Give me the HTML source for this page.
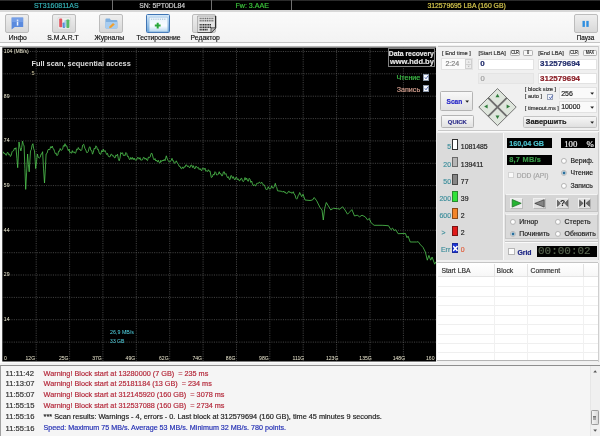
<!DOCTYPE html>
<html lang="ru">
<head>
<meta charset="utf-8">
<title>Victoria HDD scan</title>
<style>
html,body{margin:0;padding:0;}
body{-webkit-text-stroke:0.18px;width:600px;height:436px;overflow:hidden;background:#f0f0f0;font-family:"Liberation Sans",sans-serif;font-size:6.8px;color:#222;position:relative;}
#root{position:absolute;left:0;top:0;width:600px;height:436px;overflow:hidden;will-change:transform;}
.a{position:absolute;white-space:nowrap;line-height:1;}
.c{transform:translate(-50%,-50%);}
.m{transform:translateY(-50%);}
/* top bar */
#topbar{left:0;top:0;width:600px;height:10px;background:linear-gradient(#555 0,#000 1px);}
#topbar .sep{position:absolute;top:0;width:1px;height:10px;background:#707070;}
#topbar span{position:absolute;top:5.9px;transform:translate(-50%,-50%);font-size:6.8px;line-height:1;}
/* toolbar */
#toolbar{left:0;top:10px;width:600px;height:35px;background:linear-gradient(#fbfbfb,#f2f2f2);}
#tbline1{left:0;top:10px;width:600px;height:1.5px;background:#d8d8d8;}
#tbline2{left:0;top:41.8px;width:600px;height:1.5px;background:#c4c4c4;}
#tbline3{left:0;top:43.3px;width:600px;height:1.5px;background:#fdfdfd;}
.tb{position:absolute;top:14.3px;width:24px;height:18.5px;border:0.8px solid #bcbcbc;border-radius:2px;background:linear-gradient(#eeeeee,#d8d8d8);box-sizing:border-box;}
.tb.act{border-color:#3f74b4;border-radius:1.5px;background:linear-gradient(#d4e8f8,#6ea8dc);}
.tl{position:absolute;top:37.6px;transform:translate(-50%,-50%);font-size:6.8px;color:#141414;line-height:1;white-space:nowrap;}
/* graph */
#gframe{left:0;top:45px;width:438px;height:318px;background:#fafafa;}
#graph{position:absolute;left:2px;top:47px;}
/* right panel */
#rpanel{left:437px;top:46px;width:161.5px;height:316px;background:#f0f0f0;}
.lbl{font-size:5.7px;color:#333;}
.box{position:absolute;background:#fff;box-sizing:border-box;border:0.6px solid #e2e2e2;}
.btn{position:absolute;box-sizing:border-box;border:0.8px solid #b4b4b4;border-radius:1.5px;background:linear-gradient(#f8f8f8,#e2e2e2);}
.sbtn{position:absolute;box-sizing:border-box;border:0.7px solid #b2b2b2;border-radius:1.2px;background:#f7f7f7;height:6.6px;top:49.5px;}
.sbtn span{position:absolute;left:50%;top:50%;transform:translate(-50%,-50%) scaleX(.8);font-size:4.8px;line-height:1;color:#2a2a2a;}
.num{font-size:8px;font-weight:bold;}
.teal{color:#3f8f9c;}
.blk{position:absolute;box-sizing:border-box;border:0.8px solid #303030;width:6px;height:10.4px;left:452.3px;}
.radio{position:absolute;width:6.2px;height:6.2px;border-radius:50%;box-sizing:border-box;border:0.7px solid #b8b8b8;background:radial-gradient(#ffffff 40%,#e6e6e6);transform:translate(-50%,-50%);}
.radio.on::after{content:"";position:absolute;left:50%;top:50%;width:2.8px;height:2.8px;border-radius:50%;background:#2a6f9c;transform:translate(-50%,-50%);}
.chk{position:absolute;box-sizing:border-box;border:0.7px solid #a8a8a8;background:#fdfdfd;}
.lcd{position:absolute;background:#000;box-sizing:border-box;}
/* log */
#log{left:0;top:365px;width:600px;height:71px;background:#f5f5f5;border-top:1px solid #8e8e8e;border-left:1px solid #a0a0a0;box-sizing:border-box;}
.lt{position:absolute;left:5.5px;font-size:7.6px;color:#303030;transform:translateY(-50%);line-height:1;white-space:nowrap;}
.lm{position:absolute;left:43.6px;font-size:7.2px;transform:translateY(-50%);line-height:1;white-space:nowrap;}
.w{color:#b4283a;font-size:7.27px;}
.k{color:#222;}
.b{color:#2430b4;font-size:7.16px;}
</style>
</head>
<body>
<div id="root">
<!-- TOP BAR -->
<div id="topbar" class="a">
  <div class="sep" style="left:112.3px"></div><div class="sep" style="left:211.4px"></div><div class="sep" style="left:291.4px"></div>
  <span style="left:56.3px;color:#35b4b8;font-size:6.95px">ST3160811AS</span>
  <span style="left:162.2px;color:#d0d0d0">SN: 5PT0DL84</span>
  <span style="left:252.2px;top:6.6px;color:#3cc43c;font-size:7.1px">Fw: 3.AAE</span>
  <span style="left:466.6px;color:#dccc50;font-size:6.85px">312579695 LBA (160 GB)</span>
</div>
<!-- TOOLBAR -->
<div id="toolbar" class="a"></div>
<div id="tbline1" class="a"></div><div id="tbline2" class="a"></div><div id="tbline3" class="a"></div>

<div class="tb" style="left:5.4px">
  <svg width="22" height="16.5" viewBox="0 0 22 16.5" style="position:absolute;left:0;top:0"><path d="M5.6 2.6h11.6v9.4h-8.4l-3.2 2.4z" fill="#5a8ade"/><path d="M5.6 2.6h11.6v4.5h-11.6z" fill="#86acec" opacity=".6"/><rect x="10.8" y="6.6" width="1.5" height="4" fill="#eef4ff"/><rect x="10.8" y="4.6" width="1.5" height="1.3" fill="#eef4ff"/></svg>
</div>
<div class="tl" style="left:17.8px">Инфо</div>

<div class="tb" style="left:52.3px">
  <svg width="22" height="16.5" viewBox="0 0 22 16.5" style="position:absolute;left:0;top:0"><rect x="5" y="2.4" width="12.6" height="11.6" rx=".8" fill="#efefef" stroke="#cfcfcf" stroke-width=".5"/><rect x="6.2" y="3.6" width="3" height="8.6" rx=".8" fill="#e25560"/><rect x="9.6" y="7.4" width="2.6" height="5.6" rx=".8" fill="#5a8fd8"/><rect x="11.4" y="5" width="2" height="7" rx=".8" fill="#9cc4ee" opacity=".8"/><rect x="13.4" y="4.4" width="3" height="8.6" rx=".8" fill="#58b868"/></svg>
</div>
<div class="tl" style="left:63px">S.M.A.R.T</div>

<div class="tb" style="left:99.3px">
  <svg width="22" height="16.5" viewBox="0 0 22 16.5" style="position:absolute;left:0;top:0"><path d="M5.4 4.6q0-1 1-1h3.4l1 1.4h5.6q1 0 1 1v6.4q0 1-1 1h-10q-1 0-1-1z" fill="#7fb0e0"/><path d="M5.4 7h12v5.4q0 1-1 1h-10q-1 0-1-1z" fill="#a8cdf0"/><path d="M9.4 11.4l3.6-3.4 1.8 1.6-3.6 3.2-2 .4z" fill="#f0a030"/></svg>
</div>
<div class="tl" style="left:109.3px">Журналы</div>

<div class="tb act" style="left:146px">
  <svg width="24" height="18.5" viewBox="0 0 24 18.5" style="position:absolute;left:-.8px;top:-.8px"><defs><linearGradient id="tg" x1="0" y1="0" x2="0" y2="1"><stop offset="0" stop-color="#eaf4fc"/><stop offset=".6" stop-color="#f8fcff"/><stop offset="1" stop-color="#b8d8f0"/></linearGradient></defs><rect x="3.2" y="2.2" width="18.6" height="14.6" rx=".8" fill="url(#tg)" stroke="#8fb8dc" stroke-width=".5"/><path d="M5 4.2h15" stroke="#9ab4cc" stroke-width=".9" stroke-dasharray="1.2 1"/><path d="M10.7 7.7h2v1.9h1.9v2h-1.9v1.9h-2v-1.9h-1.9v-2h1.9z" fill="#2aa83a"/></svg>
</div>
<div class="tl" style="left:158.5px">Тестирование</div>

<div class="tb" style="left:192.3px">
  <svg width="24" height="18.5" viewBox="0 0 24 18.5" style="position:absolute;left:-.8px;top:-.8px"><path d="M4.6 1h18v11.8l-4.6 5h-13.4z" fill="#e4e4e4" stroke="#8a8a8a" stroke-width=".6"/><path d="M22.6 1v11.8l-4.6 5h-13.4" fill="none" stroke="#2c2c2c" stroke-width="1.3"/><g stroke="#6e6e6e" stroke-width="1.5" stroke-dasharray="1.2 .6"><path d="M6.6 3.6h14.4M6.6 5.8h14.4"/></g><g stroke="#2e2e2e" stroke-width="1.6" stroke-dasharray="1.2 .5"><path d="M6.6 9.8h11.6M6.6 12.2h11.6M6.6 14.6h8.4"/></g><path d="M18 17.8v-5h4.6" fill="#bdbdbd" stroke="#3a3a3a" stroke-width=".8"/></svg>
</div>
<div class="tl" style="left:205.2px">Редактор</div>

<div class="tb" style="left:574.2px">
  <svg width="22" height="16.5" viewBox="0 0 22 16.5" style="position:absolute;left:0;top:0"><rect x="7.5" y="5.9" width="2.4" height="6" fill="#2f8fe0"/><rect x="11.3" y="5.9" width="2.4" height="6" fill="#2f8fe0"/></svg>
</div>
<div class="tl" style="left:585.5px;font-size:6.3px">Пауза</div>

<!-- GRAPH -->
<div id="gframe" class="a"></div>
<div class="a" style="left:0;top:45.5px;width:438px;height:1px;background:#b4b4b4"></div>
<svg id="graph" width="435" height="315" viewBox="0 0 435 315">
<rect width="435" height="315" fill="#fafafa"/>
<g transform="translate(.3,.5)">
<rect width="434.4" height="314" fill="#000"/>
<clipPath id="gc"><rect width="434.4" height="314"/></clipPath>
<g clip-path="url(#gc)">
<g stroke="#6c6c6c" stroke-width="0.62" stroke-dasharray="1.1 1.2" fill="none"><line x1="33.9" y1="0" x2="33.9" y2="314"/><line x1="67.3" y1="0" x2="67.3" y2="314"/><line x1="100.6" y1="0" x2="100.6" y2="314"/><line x1="134.0" y1="0" x2="134.0" y2="314"/><line x1="167.4" y1="0" x2="167.4" y2="314"/><line x1="200.8" y1="0" x2="200.8" y2="314"/><line x1="234.2" y1="0" x2="234.2" y2="314"/><line x1="267.5" y1="0" x2="267.5" y2="314"/><line x1="300.9" y1="0" x2="300.9" y2="314"/><line x1="334.3" y1="0" x2="334.3" y2="314"/><line x1="367.7" y1="0" x2="367.7" y2="314"/><line x1="401.1" y1="0" x2="401.1" y2="314"/><line x1="0" y1="4.0" x2="434.4" y2="4.0"/><line x1="0" y1="26.3" x2="434.4" y2="26.3"/><line x1="0" y1="48.7" x2="434.4" y2="48.7"/><line x1="0" y1="71.1" x2="434.4" y2="71.1"/><line x1="0" y1="93.4" x2="434.4" y2="93.4"/><line x1="0" y1="115.8" x2="434.4" y2="115.8"/><line x1="0" y1="138.1" x2="434.4" y2="138.1"/><line x1="0" y1="160.5" x2="434.4" y2="160.5"/><line x1="0" y1="182.8" x2="434.4" y2="182.8"/><line x1="0" y1="205.2" x2="434.4" y2="205.2"/><line x1="0" y1="227.5" x2="434.4" y2="227.5"/><line x1="0" y1="249.9" x2="434.4" y2="249.9"/><line x1="0" y1="272.2" x2="434.4" y2="272.2"/><line x1="0" y1="294.6" x2="434.4" y2="294.6"/></g>
<polyline points="0.9,104.2 1.7,106.2 2.5,105.6 3.3,107.4 4.1,107.8 4.9,105.1 5.7,105.0 6.5,107.4 7.3,106.7 8.1,109.0 8.9,107.8 9.8,104.2 10.6,103.4 11.4,103.2 12.1,100.8 12.9,101.7 13.7,100.2 14.6,110.9 15.4,120.2 16.7,94.5 17.6,99.9 18.6,103.4 19.4,99.9 20.2,93.7 21.0,96.8 21.8,98.5 22.6,121.0 23.4,141.9 24.3,125.4 25.3,106.5 26.1,116.9 26.9,124.3 28.2,103.4 29.0,102.1 29.8,97.6 30.6,96.2 31.4,101.3 32.2,103.4 33.4,121.1 34.2,114.4 35.0,106.5 36.0,109.9 37.1,110.5 37.9,109.8 38.7,106.6 39.5,106.5 40.3,104.2 41.2,120.7 42.2,135.5 43.0,122.3 43.8,106.5 44.8,105.7 45.7,102.2 46.7,101.8 47.5,102.2 48.3,99.2 49.1,100.4 49.9,98.5 50.7,101.1 51.5,101.6 52.3,104.2 53.1,106.3 53.9,105.7 54.7,108.2 55.5,107.4 56.3,103.7 57.1,103.9 57.9,101.0 58.7,102.8 59.5,102.5 60.3,101.8 61.1,98.0 61.9,99.0 62.7,96.2 63.5,98.6 64.4,98.3 65.2,101.0 66.0,103.1 66.8,101.6 67.6,105.3 68.4,105.0 69.2,105.7 70.0,103.1 70.8,105.1 71.6,104.2 72.7,105.8 73.5,105.3 74.4,101.6 75.2,102.2 76.0,100.0 76.8,102.1 77.7,101.6 78.5,103.3 79.5,102.3 80.4,97.6 81.4,96.7 82.5,100.7 83.5,102.5 84.4,105.1 85.2,105.0 86.0,103.9 86.9,99.9 87.7,99.2 88.5,102.8 89.4,103.1 90.2,106.7 91.0,104.8 91.9,100.8 92.7,101.6 93.6,98.3 94.4,99.2 95.2,102.1 96.0,101.8 96.9,105.5 97.7,106.7 98.5,106.7 99.4,103.0 100.2,104.4 101.0,101.7 101.8,104.1 102.7,103.0 103.5,105.0 104.4,107.0 105.2,105.9 106.0,108.8 106.9,109.2 107.7,109.4 108.6,106.8 109.4,106.7 110.2,108.5 111.1,108.2 111.9,110.0 112.7,110.5 113.5,107.6 114.4,108.3 115.2,106.7 116.0,111.0 116.9,113.3 117.7,110.5 118.5,105.0 119.4,106.3 120.2,105.2 121.0,108.0 121.9,107.5 122.7,108.3 123.6,105.0 124.4,105.8 125.2,109.1 126.1,108.9 126.9,111.7 127.7,112.2 128.5,109.9 129.4,111.8 130.2,110.0 131.0,112.1 131.8,110.5 132.7,112.6 133.5,112.5 134.3,112.5 135.2,110.0 136.0,110.0 136.8,111.7 137.7,110.1 138.5,112.7 139.4,112.5 140.2,112.3 141.1,109.9 141.9,110.0 142.7,111.8 143.6,110.6 144.4,112.5 145.2,113.1 146.1,109.6 146.9,110.0 147.8,109.7 148.8,106.0 149.7,105.8 151.0,110.8 151.8,112.4 152.7,111.0 153.5,113.5 154.4,112.5 155.2,114.6 156.1,112.8 156.9,115.0 157.7,115.7 158.5,112.8 159.4,114.1 160.2,112.5 161.0,113.5 161.9,111.9 162.7,113.3 164.0,108.3 165.0,111.5 166.0,113.3 166.8,114.4 167.7,114.2 168.7,113.3 169.7,110.8 170.4,113.2 171.2,113.2 171.9,115.8 172.9,115.2 174.0,113.3 175.0,115.6 176.0,116.7 176.8,118.8 177.7,118.7 178.5,120.8 179.3,121.3 180.2,119.4 181.0,121.0 181.9,119.2 182.7,119.8 183.6,117.3 184.4,117.5 185.2,119.2 186.1,118.3 186.9,120.0 187.7,120.1 188.6,117.6 189.4,117.5 190.2,120.0 191.1,118.2 191.9,120.8 192.7,121.3 193.6,118.7 194.4,119.2 195.2,120.5 196.0,119.8 196.9,122.1 197.7,121.0 198.5,122.5 199.3,123.3 200.2,120.6 201.0,120.8 201.8,122.0 202.7,120.6 203.5,123.8 204.4,123.3 205.2,124.0 206.0,122.2 206.9,123.9 207.7,123.3 209.0,130.0 210.0,129.4 211.0,126.7 211.8,127.6 212.7,124.2 213.5,125.0 214.3,127.5 215.2,127.5 216.0,126.7 216.9,124.2 217.7,126.5 218.6,126.2 219.4,128.3 220.2,128.2 221.1,124.5 221.9,124.2 222.7,126.9 223.6,126.0 224.4,128.3 225.2,130.2 226.1,129.2 226.9,131.7 227.7,132.1 228.6,128.1 229.4,128.3 230.2,130.8 231.1,129.2 231.9,131.7 232.7,132.4 233.6,129.8 234.4,130.0 235.2,132.2 236.1,131.3 236.9,133.3 237.7,133.1 238.6,131.0 239.4,130.8 240.2,133.4 241.0,134.2 241.8,132.9 242.7,130.0 243.5,132.3 244.4,130.7 245.2,133.3 246.0,133.8 246.9,130.8 247.7,131.7 248.5,134.9 249.4,133.6 250.2,136.7 251.0,138.2 251.9,137.0 252.7,138.3 253.5,138.3 254.4,135.9 255.2,135.8 256.0,136.0 256.9,134.6 257.7,135.0 258.5,136.1 259.4,134.7 260.2,135.8 261.0,137.6 261.9,137.4 262.7,139.2 263.6,141.6 264.4,142.5 265.2,141.3 266.0,139.2 266.8,141.2 267.7,141.7 268.6,140.9 269.4,138.3 270.2,140.3 271.0,140.8 272.0,139.1 273.0,135.8 273.7,138.9 274.5,140.3 275.2,143.3 279.4,143.8 280.2,144.7 281.1,143.5 281.9,144.9 282.7,144.2 283.6,145.9 284.4,145.8 285.2,145.7 286.1,143.9 286.9,143.8 287.7,145.3 288.6,144.4 289.4,145.8 290.2,145.5 291.0,144.2 291.8,146.5 292.7,147.5 293.6,150.7 294.4,151.7 295.1,150.8 295.9,147.9 296.6,147.5 297.4,145.0 299.4,149.2 300.7,146.7 302.7,152.5 307.7,153.0 310.2,152.5 311.9,150.0 314.4,153.3 317.7,160.0 319.7,162.5 321.0,172.5 322.4,160.8 324.0,155.0 326.0,158.3 328.5,162.5 331.0,160.8 335.2,161.2 337.7,161.7 340.2,159.2 342.7,162.5 345.2,166.7 346.9,165.0 349.6,162.1 352.2,168.5 354.9,167.7 357.3,169.3 359.7,167.7 362.9,169.3 365.3,172.5 367.0,170.9 368.6,175.0 371.8,177.8 379.8,177.8 386.2,178.2 388.6,182.2 390.2,180.6 391.8,183.0 393.4,182.2 395.8,186.2 403.1,185.9 404.7,190.2 405.8,188.6 407.9,194.5 414.3,194.5 415.9,194.2 418.3,197.4 420.7,199.8 423.1,204.6 425.0,212.7 426.6,207.9 428.4,212.7 429.8,209.5 432.4,216.7 433.5,214.3" fill="none" stroke="#50c650" stroke-width="0.8" stroke-linejoin="round"/>
<g font-family="Liberation Sans, sans-serif" font-size="5.1" fill="#ecE8d0"><text x="1.5" y="5.3">104 (MB/s)</text><text x="1.5" y="50.0">89</text><text x="1.5" y="94.7">74</text><text x="1.5" y="139.4">59</text><text x="1.5" y="184.1">44</text><text x="1.5" y="228.8">29</text><text x="1.5" y="273.5">14</text><text x="1.6" y="312.2">0</text><text x="23.2" y="312.2">12G</text><text x="56.6" y="312.2">25G</text><text x="89.9" y="312.2">37G</text><text x="123.3" y="312.2">49G</text><text x="156.7" y="312.2">62G</text><text x="190.1" y="312.2">74G</text><text x="223.5" y="312.2">86G</text><text x="256.8" y="312.2">98G</text><text x="290.2" y="312.2">111G</text><text x="323.6" y="312.2">123G</text><text x="357.0" y="312.2">135G</text><text x="390.4" y="312.2">148G</text><text x="423.7" y="312.2">160</text></g>
<text x="29.1" y="18.9" font-family="Liberation Sans, sans-serif" font-size="7.4" font-weight="bold" fill="#dcdcdc">Full scan, sequential access</text>
<text x="29.2" y="27.4" font-family="Liberation Sans, sans-serif" font-size="5.6" fill="#d0c8a0">5</text>
<text x="107.8" y="286.5" font-family="Liberation Sans, sans-serif" font-size="5.3" fill="#54dcec">26,9 MB/s</text>
<text x="107.8" y="295.6" font-family="Liberation Sans, sans-serif" font-size="5" fill="#54dcec">33 GB</text>
</g>
</g>
</svg>
<div class="a" style="left:388px;top:48.2px;width:47.3px;height:18.5px;box-sizing:border-box;border:0.7px solid #808080;background:#000"></div>
<div class="a" style="right:166.2px;top:54px;transform:translateY(-50%);font-size:6.8px;font-weight:bold;color:#e6e6e6">Data recovery</div>
<div class="a" style="right:166.2px;top:62.1px;transform:translateY(-50%);font-size:7.5px;font-weight:bold;color:#e6e6e6">www.hdd.by</div>
<div class="a m" style="left:396.6px;top:79.3px;font-size:7.1px;color:#3fc04a">Чтение</div>
<div class="a m" style="left:396.8px;top:90.6px;font-size:7.1px;color:#d4a090">Запись</div>
<div class="chk" style="left:422.6px;top:74.2px;width:6.4px;height:6.4px;background:#f6f8fc;border-color:#8a96a8"><svg width="5" height="5" viewBox="0 0 5 5" style="position:absolute;left:0;top:0"><path d="M.9 2.4l1.1 1.4 2-3" fill="none" stroke="#304898" stroke-width=".8"/></svg></div>
<div class="chk" style="left:422.6px;top:85.2px;width:6.4px;height:6.4px;background:#f6f8fc;border-color:#8a96a8"><svg width="5" height="5" viewBox="0 0 5 5" style="position:absolute;left:0;top:0"><path d="M.9 2.4l1.1 1.4 2-3" fill="none" stroke="#304898" stroke-width=".8"/></svg></div>

<!-- RIGHT PANEL -->
<div id="rpanel" class="a"></div>
<div class="a" style="left:436.4px;top:46px;width:1px;height:316px;background:#ececec"></div>
<div class="a" style="left:437.5px;top:45.5px;width:161px;height:1px;background:#c6c6c6"></div>
<div class="a" style="left:597.6px;top:46px;width:1px;height:316px;background:#cfcfcf"></div>

<div class="a m lbl" style="left:442px;top:53.6px">[ End time ]</div>
<div class="a m lbl" style="left:478.4px;top:53.6px">[Start LBA]</div>
<div class="a m lbl" style="left:538.3px;top:53.6px">[End LBA]</div>
<div class="sbtn" style="left:510px;width:10.4px"><span>CLR</span></div>
<div class="sbtn" style="left:522.8px;width:10px"><span>0</span></div>
<div class="sbtn" style="left:569.3px;width:10.2px"><span>CLR</span></div>
<div class="sbtn" style="left:583px;width:13.8px"><span>MAX</span></div>

<div class="box" style="left:441.4px;top:58px;width:31.4px;height:12.2px;background:#fbfbfb"></div>
<div class="a m" style="left:445.4px;top:65.2px;font-size:7.1px;color:#808080">2:24</div>
<div class="a" style="left:464.6px;top:59px;width:7.4px;height:10.4px;background:#ececec;border:0.6px solid #d0d0d0;box-sizing:border-box"></div>
<div class="a" style="left:464.6px;top:64px;width:7.4px;height:0.6px;background:#cfcfcf"></div>
<svg class="a" style="left:464.6px;top:59px" width="7.4" height="10.4" viewBox="0 0 7.4 10.4"><path d="M2.6 3.6l1.1-1.4 1.1 1.4zM2.6 6.8l1.1 1.4 1.1-1.4z" fill="#b4b4b4"/></svg>

<div class="box" style="left:478.2px;top:58.5px;width:55.6px;height:11px"></div>
<div class="a m num" style="left:480.2px;top:64.2px;color:#1f2a6a">0</div>
<div class="box" style="left:538.2px;top:58.5px;width:58.8px;height:11px"></div>
<div class="a m num" style="left:540px;top:64.2px;color:#1f2a6a">312579694</div>
<div class="box" style="left:478.2px;top:73.2px;width:55.6px;height:10.4px;background:#ebebeb;border-color:#e4e4e4"></div>
<div class="a m" style="left:480.4px;top:78.6px;font-size:7.6px;color:#9c9c9c">0</div>
<div class="box" style="left:538.2px;top:73.2px;width:58.8px;height:10.4px"></div>
<div class="a m num" style="left:540px;top:78.6px;color:#8a1c24">312579694</div>

<!-- Scan / quick -->
<div class="btn" style="left:440.3px;top:91px;width:32.6px;height:19.6px"></div>
<div class="a c" style="left:454.4px;top:102px;font-size:6.6px;font-weight:bold;color:#2828c8">Scan</div>
<svg class="a" style="left:464.6px;top:99.8px" width="4.4" height="3" viewBox="0 0 4.4 3"><path d="M.3.4h3.8l-1.9 2.3z" fill="#222"/></svg>
<div class="btn" style="left:441px;top:115.2px;width:32.6px;height:12.6px"></div>
<div class="a c" style="left:457.3px;top:122.9px;font-size:5.9px;font-weight:bold;color:#30308c">QUICK</div>

<!-- diamond -->
<svg class="a" style="left:477px;top:87px" width="41" height="41" viewBox="0 0 41 41">
  <path d="M20.5 1.6L39.2 20.1 20.5 38.6 1.8 20.1z" fill="#dfe6dd" stroke="#555" stroke-width=".8"/>
  <path d="M11.2 10.8L29.8 29.4M29.8 10.8L11.2 29.4" stroke="#6e6e6e" stroke-width="1.9" fill="none"/>
  <path d="M18.5 10.3l2-3.5 2 3.5z" fill="#2f7e3c"/>
  <path d="M18.5 28.6l2 3.5 2-3.5z" fill="#2f7e3c"/>
  <path d="M10.6 17.6l-3.5 2 3.5 2z" fill="#2f7e3c"/>
  <path d="M29.6 17.6l3.5 2-3.5 2z" fill="#2f7e3c"/>
</svg>

<div class="a m lbl" style="left:524.8px;top:89.6px">[ block size ]</div>
<div class="a m lbl" style="left:524.8px;top:96.9px">[ auto ]</div>
<div class="a m lbl" style="left:524.8px;top:108.9px">[ timeout.ms ]</div>
<div class="chk" style="left:546.6px;top:94.4px;width:6.8px;height:6px;background:#f2f5fb;border-color:#9aa4b8"><svg width="6" height="5" viewBox="0 0 6 5" style="position:absolute;left:0;top:0"><path d="M1.3 2.2l1.2 1.5 2.2-3.2" fill="none" stroke="#3048a8" stroke-width=".8"/></svg></div>
<div class="box" style="left:559.4px;top:87.2px;width:37.6px;height:12.2px;background:#fafafa"></div>
<div class="a m" style="left:561.2px;top:93.4px;font-size:7px;color:#222">256</div>
<svg class="a" style="left:590px;top:92.2px" width="4.4" height="3" viewBox="0 0 4.4 3"><path d="M.3.4h3.8l-1.9 2.3z" fill="#222"/></svg>
<div class="box" style="left:559.4px;top:100.7px;width:37.6px;height:12.2px;background:#fafafa"></div>
<div class="a m" style="left:561.2px;top:106.9px;font-size:6.9px;color:#222">10000</div>
<svg class="a" style="left:590px;top:105.8px" width="4.4" height="3" viewBox="0 0 4.4 3"><path d="M.3.4h3.8l-1.9 2.3z" fill="#222"/></svg>
<div class="btn" style="left:523.4px;top:115.7px;width:73.8px;height:12.2px;border-color:#c4c4c4;background:linear-gradient(#f6f6f6,#e0e0e0)"></div>
<div class="a m" style="left:525.8px;top:121.9px;font-size:7.4px;font-weight:bold;color:#222">Завершить</div>
<svg class="a" style="left:590px;top:120.8px" width="4.4" height="3" viewBox="0 0 4.4 3"><path d="M.3.4h3.8l-1.9 2.3z" fill="#222"/></svg>

<!-- separator -->
<div class="a" style="left:437.5px;top:130px;width:161px;height:1px;background:#c8c8c8"></div>
<div class="a" style="left:437.5px;top:131px;width:161px;height:1px;background:#fafafa"></div>
<!-- left subpanel -->
<div class="a" style="left:437.2px;top:133px;width:66.2px;height:126.6px;background:#dbdbdb"></div>
<div class="a" style="left:503.4px;top:133px;width:1px;height:126.6px;background:#f8f8f8"></div>

<div class="a m teal" style="right:149px;top:147.2px;font-size:6.9px">5</div>
<div class="blk" style="top:139.2px;background:#fff"></div>
<div class="a m" style="left:460.8px;top:147.2px;font-size:6.9px">1081485</div>
<div class="a m teal" style="right:149px;top:165px;font-size:6.9px">20</div>
<div class="blk" style="top:156.7px;background:#b6b6b6;border-color:#6a6a6a"></div>
<div class="a m" style="left:460.8px;top:165px;font-size:6.9px">139411</div>
<div class="a m teal" style="right:149px;top:181.6px;font-size:6.9px">50</div>
<div class="blk" style="top:174.2px;background:#868686;border-color:#4a4a4a"></div>
<div class="a m" style="left:460.8px;top:181.8px;font-size:6.9px">77</div>
<div class="a m teal" style="right:149px;top:199px;font-size:6.9px">200</div>
<div class="blk" style="top:191.4px;background:#2fe33a;border-color:#2a8a30"></div>
<div class="a m" style="left:460.8px;top:198.6px;font-size:6.9px">39</div>
<div class="a m teal" style="right:149px;top:216px;font-size:6.9px">600</div>
<div class="blk" style="top:208.4px;background:#f2842a;border-color:#8a4a1a"></div>
<div class="a m" style="left:460.8px;top:215.8px;font-size:6.9px">2</div>
<div class="a m teal" style="left:441.6px;top:232.6px;font-size:6.9px">&gt;</div>
<div class="blk" style="top:226px;background:#e11b1b;border-color:#7a1616"></div>
<div class="a m" style="left:460.8px;top:233.2px;font-size:6.9px">2</div>
<div class="a m teal" style="left:441px;top:249.8px;font-size:6.9px">Err</div>
<div class="blk" style="top:242.6px;background:#1c34d8;border-color:#1a2a9a"><svg width="4.8" height="9" viewBox="0 0 4.8 9" style="position:absolute;left:0;top:0"><path d="M.1 2.1l4.4 4.8M4.5 2.1l-4.4 4.8" stroke="#fff" stroke-width="1.5"/></svg></div>
<div class="a m" style="left:460.8px;top:249.9px;font-size:6.9px;color:#e2603e">0</div>

<!-- right subpanel -->
<div class="a" style="left:504.4px;top:133px;width:93.4px;height:127px;background:#e7e7e7"></div>
<div class="lcd" style="left:506.6px;top:138.2px;width:45.6px;height:9.8px"></div>
<div class="a m" style="left:509.2px;top:143.6px;font-size:7.2px;font-weight:bold;color:#4cc4d0">160,04 GB</div>
<div class="lcd" style="left:561px;top:138.2px;width:34.2px;height:9.8px"></div>
<div class="a m" style="left:564.2px;top:143.7px;font-family:'Liberation Serif',serif;font-size:8.8px;color:#ececec">100</div>
<div class="a m" style="left:586.4px;top:143.7px;font-family:'Liberation Serif',serif;font-size:8.8px;color:#ececec">%</div>
<div class="lcd" style="left:506.6px;top:155px;width:45.4px;height:10px"></div>
<div class="a m" style="left:509.2px;top:160px;font-size:7.4px;font-weight:bold;color:#3a9c4a;letter-spacing:.25px">8,7 MB/s</div>

<div class="radio" style="left:564.2px;top:160.6px"></div>
<div class="a m" style="left:570.4px;top:160.8px;font-size:6.8px">Вериф.</div>
<div class="radio on" style="left:564.2px;top:173px"></div>
<div class="a m" style="left:570.4px;top:173.2px;font-size:6.8px">Чтение</div>
<div class="radio" style="left:564.2px;top:185.6px"></div>
<div class="a m" style="left:570.4px;top:185.8px;font-size:6.8px">Запись</div>

<div class="chk" style="left:508px;top:172.3px;width:6px;height:6px;border-color:#d4d4d4;background:#fafafa"></div>
<div class="a m" style="left:516.8px;top:176px;font-size:6.7px;color:#a4a4a4">DDD (API)</div>

<!-- buttons panel -->
<div class="a" style="left:505px;top:194px;width:93px;height:18.2px;background:#d5d5d5;box-sizing:border-box;border:0.8px solid #c4c4c4;border-top-color:#f4f4f4"></div>
<div class="btn" style="left:510.2px;top:198px;width:13.2px;height:10.6px;border-color:#f2f2f2 #bcbcbc #bcbcbc #f2f2f2;background:#ececec;border-radius:0"></div>
<svg class="a" style="left:510.2px;top:198px" width="13.2" height="10.6" viewBox="0 0 13.2 10.6"><path d="M2.2 1.5v7.6l9-3.8z" fill="#25b432" stroke="#1a6a22" stroke-width=".7"/></svg>
<div class="btn" style="left:533.2px;top:198px;width:13.2px;height:10.6px;border-color:#f0f0f0 #b8b8b8 #b8b8b8 #f0f0f0;background:#e0e0e0;border-radius:0"></div>
<svg class="a" style="left:533.2px;top:198px" width="13.2" height="10.6" viewBox="0 0 13.2 10.6"><path d="M11.2 1.7v7.4l-9.4-3.7z" fill="#848484" stroke="#2e2e2e" stroke-width=".7"/></svg>
<div class="btn" style="left:555.8px;top:198px;width:13.2px;height:10.6px;border-color:#f0f0f0 #b8b8b8 #b8b8b8 #f0f0f0;background:#e0e0e0;border-radius:0"></div>
<svg class="a" style="left:555.8px;top:198px" width="13.2" height="10.6" viewBox="0 0 13.2 10.6"><path d="M1.4 2.2v6.2l3-3.1z" fill="#6a6a6a" stroke="#303030" stroke-width=".5"/><path d="M11.8 2.2v6.2l-3-3.1z" fill="#6a6a6a" stroke="#303030" stroke-width=".5"/><text x="6.6" y="8.4" text-anchor="middle" font-size="8.6" font-weight="bold" font-family="Liberation Sans, sans-serif" fill="#222">?</text></svg>
<div class="btn" style="left:578.2px;top:198px;width:13.2px;height:10.6px;border-color:#f0f0f0 #b8b8b8 #b8b8b8 #f0f0f0;background:#e0e0e0;border-radius:0"></div>
<svg class="a" style="left:578.2px;top:198px" width="13.2" height="10.6" viewBox="0 0 13.2 10.6"><path d="M1.6 2.2v6.2l3.6-3.1z" fill="#6a6a6a" stroke="#303030" stroke-width=".5"/><path d="M11.6 2.2v6.2l-3.6-3.1z" fill="#6a6a6a" stroke="#303030" stroke-width=".5"/><path d="M6.6 1.6v7.4" stroke="#222" stroke-width="1.2"/></svg>

<!-- radio panel -->
<div class="a" style="left:505px;top:214.4px;width:93px;height:25px;background:#dadada;box-sizing:border-box;border:0.8px solid #c6c6c6;border-top-color:#f2f2f2"></div>
<div class="radio" style="left:513px;top:221.7px"></div>
<div class="a m" style="left:519.2px;top:221.9px;font-size:6.9px">Игнор</div>
<div class="radio on" style="left:513px;top:233.7px"></div>
<div class="a m" style="left:519.2px;top:233.9px;font-size:6.9px">Починить</div>
<div class="radio" style="left:557.8px;top:221.7px"></div>
<div class="a m" style="left:564.6px;top:221.9px;font-size:6.9px">Стереть</div>
<div class="radio" style="left:557.8px;top:233.7px"></div>
<div class="a m" style="left:564.6px;top:233.9px;font-size:6.9px">Обновить</div>

<div class="a" style="left:505px;top:241.2px;width:93px;height:1px;background:#c8c8c8"></div>
<div class="a" style="left:505px;top:242.2px;width:93px;height:1px;background:#fafafa"></div>
<div class="chk" style="left:508px;top:248.4px;width:6.8px;height:6.8px;border-color:#b6b6b6"></div>
<div class="a m" style="left:517.4px;top:252.6px;font-size:6.9px;font-weight:bold;color:#1c2484">Grid</div>
<div class="lcd" style="left:537.4px;top:246px;width:59.8px;height:11px"></div>
<div class="a" style="left:538px;top:251.9px;transform:translateY(-50%) scaleX(.93);transform-origin:0 50%;font-family:'Liberation Mono',monospace;font-size:11.8px;color:#56644e">00:00:02</div>

<!-- table -->
<div class="a" style="left:437.5px;top:260px;width:161px;height:3px;background:#f0f0f0"></div>
<div id="tbl" class="a" style="left:437.2px;top:262.4px;width:160.5px;height:99px;background:#fff;box-sizing:border-box;border-top:0.7px solid #c4c4c4;border-bottom:1.2px solid #b4b4b4"></div>
<div class="a" style="left:437.5px;top:286px;width:160.2px;height:1px;background:#efefef"></div><div class="a" style="left:437.5px;top:296px;width:160.2px;height:1px;background:#efefef"></div><div class="a" style="left:437.5px;top:305px;width:160.2px;height:1px;background:#efefef"></div><div class="a" style="left:437.5px;top:315px;width:160.2px;height:1px;background:#efefef"></div><div class="a" style="left:437.5px;top:324px;width:160.2px;height:1px;background:#efefef"></div><div class="a" style="left:437.5px;top:334px;width:160.2px;height:1px;background:#efefef"></div><div class="a" style="left:437.5px;top:343px;width:160.2px;height:1px;background:#efefef"></div><div class="a" style="left:437.5px;top:352px;width:160.2px;height:1px;background:#efefef"></div>
<div class="a" style="left:493.7px;top:277px;width:.8px;height:83.2px;background:#f1f1f1"></div>
<div class="a" style="left:527.1px;top:277px;width:.8px;height:83.2px;background:#f1f1f1"></div>
<div class="a" style="left:582.9px;top:277px;width:.8px;height:83.2px;background:#f1f1f1"></div>
<div class="a" style="left:437.5px;top:263.4px;width:160.2px;height:13.8px;background:linear-gradient(#ffffff,#f7f7f7);border-bottom:0.7px solid #e4e4e4;box-sizing:border-box"></div>
<div class="a" style="left:493.7px;top:263.6px;width:.8px;height:13.4px;background:#e2e2e2"></div>
<div class="a" style="left:527.1px;top:263.6px;width:.8px;height:13.4px;background:#e2e2e2"></div>
<div class="a" style="left:582.9px;top:263.6px;width:.8px;height:13.4px;background:#e2e2e2"></div>
<div class="a m" style="left:441.4px;top:270.8px;font-size:6.8px;color:#333">Start LBA</div>
<div class="a m" style="left:496.6px;top:270.8px;font-size:6.8px;color:#333">Block</div>
<div class="a m" style="left:530.6px;top:270.8px;font-size:6.8px;color:#333">Comment</div>

<!-- under graph strip -->
<div class="a" style="left:0;top:362px;width:600px;height:2.5px;background:#f2f2f2"></div>
<div class="a" style="left:0;top:361.6px;width:437px;height:1px;background:#fdfdfd"></div>

<!-- LOG -->
<div id="log" class="a">
</div>
<div class="lt" style="top:373.5px">11:11:42</div><div class="lm w" style="top:373.5px">Warning! Block start at 13280000 (7 GB)&nbsp; = 235 ms</div>
<div class="lt" style="top:384.4px">11:13:07</div><div class="lm w" style="top:384.4px">Warning! Block start at 25181184 (13 GB)&nbsp; = 234 ms</div>
<div class="lt" style="top:395.3px">11:55:07</div><div class="lm w" style="top:395.3px">Warning! Block start at 312145920 (160 GB)&nbsp; = 3078 ms</div>
<div class="lt" style="top:406.4px">11:55:15</div><div class="lm w" style="top:406.4px">Warning! Block start at 312537088 (160 GB)&nbsp; = 2734 ms</div>
<div class="lt" style="top:417.4px">11:55:16</div><div class="lm k" style="top:417.4px;font-size:7.32px">*** Scan results: Warnings - 4, errors - 0. Last block at 312579694 (160 GB), time 45 minutes 9 seconds.</div>
<div class="lt" style="top:428.7px">11:55:16</div><div class="lm b" style="top:428.7px">Speed: Maximum 75 MB/s. Average 53 MB/s. Minimum 32 MB/s. 780 points.</div>

<!-- scrollbar -->
<div class="a" style="left:590.4px;top:365.5px;width:9.6px;height:70.5px;background:#f0f0f0;border-left:0.6px solid #e6e6e6;box-sizing:border-box"></div>
<svg class="a" style="left:592.6px;top:370.4px" width="4.4" height="3" viewBox="0 0 4.4 3"><path d="M.3 2.6h3.8l-1.9-2.3z" fill="#555"/></svg>
<svg class="a" style="left:592.6px;top:428.8px" width="4.4" height="3" viewBox="0 0 4.4 3"><path d="M.3.4h3.8l-1.9 2.3z" fill="#555"/></svg>
<div class="a" style="left:591px;top:409.8px;width:7.6px;height:15px;box-sizing:border-box;border:0.7px solid #9c9c9c;border-radius:1.2px;background:linear-gradient(to right,#f4f4f4,#d8d8d8)"></div>
<div class="a" style="left:593.4px;top:415.6px;width:2.8px;height:.6px;background:#777;box-shadow:0 1.3px 0 #777,0 2.6px 0 #777"></div>
</div>
</body>
</html>
